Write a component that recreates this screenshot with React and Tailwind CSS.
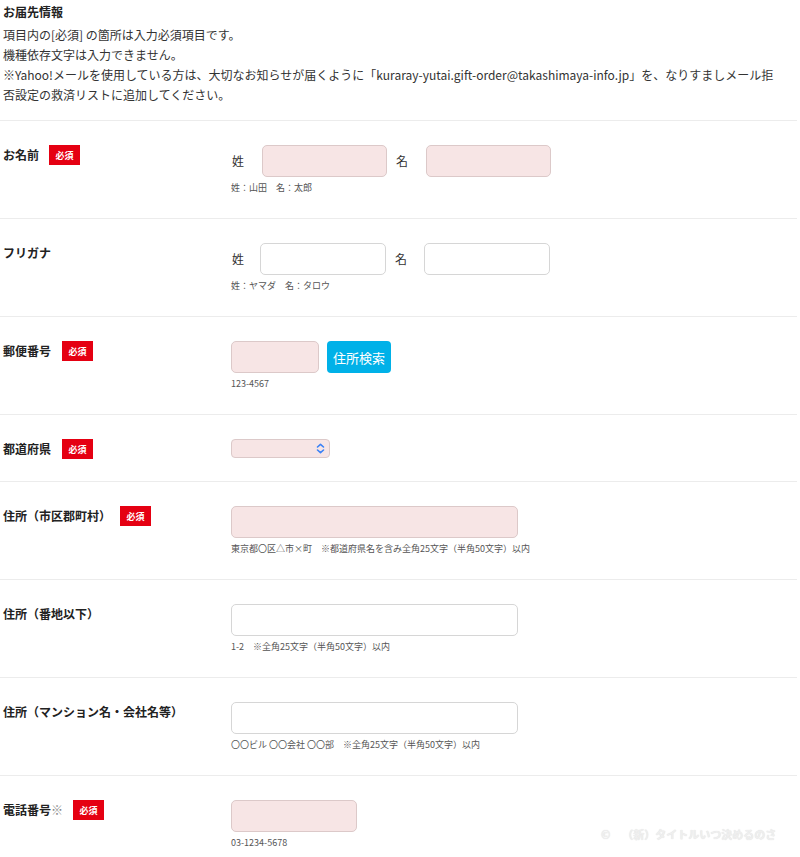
import React from 'react';

const font = "font-['Noto_Sans_CJK_JP','Noto_Sans',sans-serif]";

function Badge() {
  return (
    <span className="inline-flex items-center justify-center w-[31px] h-[20px] bg-[#e50012] text-white text-[9px] font-bold leading-none">
      必須
    </span>
  );
}

function Row({ label, required, gap = 'gap-[10px]', pb = 'pb-[23px]', children }) {
  return (
    <div className={`flex border-b border-[#ececec] pt-[24px] ${pb}`}>
      <div className={`w-[231px] shrink-0 flex items-start ${gap} pl-[3px]`}>
        <span className="text-[12px] font-bold leading-[20px] text-[#222]">{label}</span>
        {required && <Badge />}
      </div>
      <div className="flex-1">{children}</div>
    </div>
  );
}

function Hint({ children }) {
  return <p className="mt-[4px] text-[9px] leading-[14px] text-[#555]">{children}</p>;
}

const pinkInput = 'h-[32px] rounded-[5px] border border-[#dcc9c9] bg-[#f7e5e5] outline-none';
const whiteInput = 'h-[32px] rounded-[5px] border border-[#d6d6d6] bg-white outline-none';

export default function App() {
  return (
    <div className={`relative w-[800px] h-[857px] overflow-hidden bg-white text-[#333] ${font}`}>
      <div className="pr-[3px]">
        {/* intro */}
        <div className="border-b border-[#ececec] pb-[15px]">
          <h2 className="pl-[3px] pt-[2px] text-[12px] font-bold leading-[20px] text-[#222]">お届先情報</h2>
          <p className="mt-[3px] pl-[3px] text-[12px] leading-[20px] text-[#333] pr-[14px]">
            項目内の[必須] の箇所は入力必須項目です。<br />
            機種依存文字は入力できません。<br />
            ※Yahoo!メールを使用している方は、大切なお知らせが届くように「kuraray-yutai.gift-order@takashimaya-info.jp」を、なりすましメール拒否設定の救済リストに追加してください。
          </p>
        </div>

        <Row label="お名前" required>
          <div className="flex items-center">
            <span className="w-[31px] text-[12px] pl-[1px] text-[#333]">姓</span>
            <input className={`${pinkInput} w-[125px]`} />
            <span className="w-[39px] pl-[9px] text-[12px] text-[#333]">名</span>
            <input className={`${pinkInput} w-[125px]`} />
          </div>
          <Hint>姓：山田　名：太郎</Hint>
        </Row>

        <Row label="フリガナ">
          <div className="flex items-center">
            <span className="w-[29px] text-[12px] pl-[1px] text-[#333]">姓</span>
            <input className={`${whiteInput} w-[126px]`} />
            <span className="w-[38px] pl-[9px] text-[12px] text-[#333]">名</span>
            <input className={`${whiteInput} w-[126px]`} />
          </div>
          <Hint>姓：ヤマダ　名：タロウ</Hint>
        </Row>

        <Row label="郵便番号" required gap="gap-[11px]">
          <div className="flex items-center gap-[8px]">
            <input className={`${pinkInput} w-[88px]`} />
            <button className="h-[32px] w-[64px] rounded-[4px] bg-[#00b1e8] text-white text-[13px] leading-none">住所検索</button>
          </div>
          <Hint>123-4567</Hint>
        </Row>

        <Row label="都道府県" required gap="gap-[11px]" pb="pb-[22px]">
          <div className="relative w-[99px] h-[19px] rounded-[4px] border border-[#dcc9c9] bg-[#f7e5e5]">
            <svg className="absolute right-[4px] top-[3px]" width="9" height="11" viewBox="0 0 9 11" fill="none" stroke="#3b82f6" strokeWidth="1.6" strokeLinecap="round" strokeLinejoin="round">
              <path d="M1.5 4 L4.5 1.3 L7.5 4" />
              <path d="M1.5 7 L4.5 9.7 L7.5 7" />
            </svg>
          </div>
        </Row>

        <Row label="住所（市区郡町村）" required gap="gap-[9px]">
          <input className={`${pinkInput} w-[287px]`} />
          <Hint>東京都〇区△市×町　※都道府県名を含み全角25文字（半角50文字）以内</Hint>
        </Row>

        <Row label="住所（番地以下）">
          <input className={`${whiteInput} w-[287px]`} />
          <Hint>1-2　※全角25文字（半角50文字）以内</Hint>
        </Row>

        <Row label="住所（マンション名・会社名等）">
          <input className={`${whiteInput} w-[287px]`} />
          <Hint>〇〇ビル 〇〇会社 〇〇部　※全角25文字（半角50文字）以内</Hint>
        </Row>

        <Row label={<>電話番号<span className="font-normal text-[#888]">※</span></>} required>
          <input className={`${pinkInput} w-[126px]`} />
          <Hint>03-1234-5678</Hint>
        </Row>
      </div>

      {/* watermark */}
      <div className="absolute left-[601px] top-[826px] flex items-center gap-[12px] text-[11px] font-bold text-[#efefef] [text-shadow:0_0_1px_#d8d8d8]">
        <span>©</span>
        <span>（新）タイトルいつ決めるのさ</span>
      </div>
    </div>
  );
}
